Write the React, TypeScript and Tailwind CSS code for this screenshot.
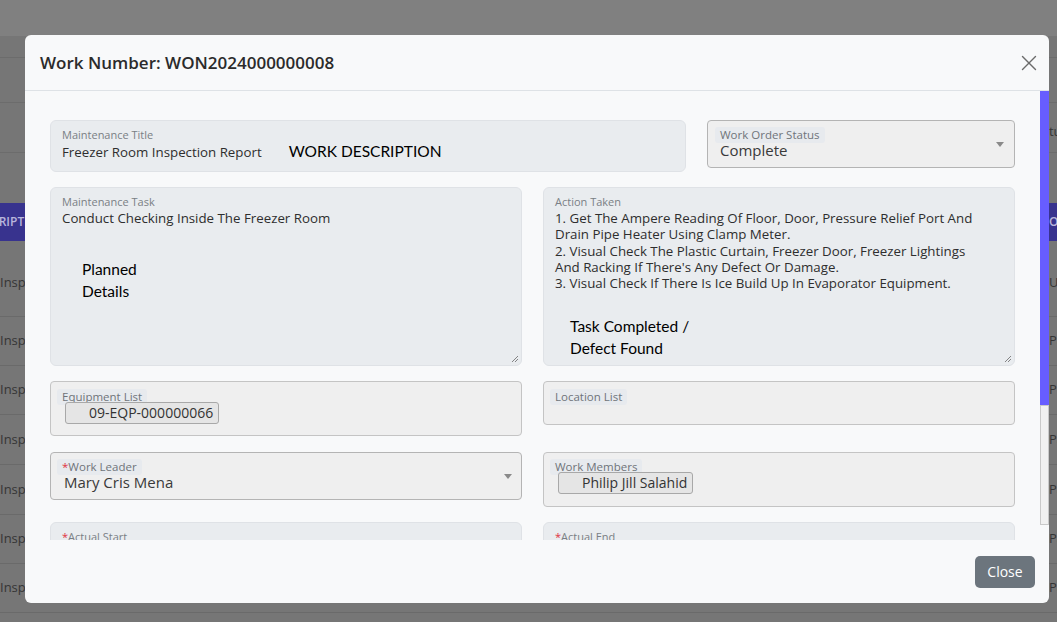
import { X } from 'lucide-react';

const rows = [
  { left: 'Inspection Report', right: 'Used', h: 'h-[76px] pt-[8px]' },
  { left: 'Inspection Report', right: 'Paid', h: 'h-[49px]' },
  { left: 'Inspection Report', right: 'Proc', h: 'h-[49px]' },
  { left: 'Inspection Report', right: 'Paid', h: 'h-[50px]' },
  { left: 'Inspection Report', right: 'Paid', h: 'h-[50px]' },
  { left: 'Inspection Report', right: 'Paid', h: 'h-[49px]' },
  { left: 'Inspection Report', right: 'Paid', h: 'h-[49px]' },
];

function Caret() {
  return (
    <svg width="8" height="5" viewBox="0 0 8 5" className="shrink-0">
      <path d="M0 0 L8 0 L4 5 Z" fill="#8a8a8a" />
    </svg>
  );
}

function Resize() {
  return (
    <svg width="8" height="8" viewBox="0 0 8 8" className="absolute right-[2px] bottom-[2px]">
      <path d="M7 1 L1 7 M7 4 L4 7" stroke="#777" strokeWidth="0.9" />
    </svg>
  );
}

function Pill({ children }: { children: React.ReactNode }) {
  return (
    <div className="flex">
      <span className="block h-[16px] rounded-[3px] bg-[#e7eaee] px-[5px] text-[11.5px] leading-[16px] text-[#6f747a]">
        {children}
      </span>
    </div>
  );
}

function Chip({ text }: { text: string }) {
  return (
    <div className="flex">
      <span className="block h-[22px] rounded-[3px] border border-[#a8a8a8] bg-[#e5e5e5] pl-[23px] pr-[5px] text-[14px] leading-[20px] text-[#333]">
        {text}
      </span>
    </div>
  );
}

function Req() {
  return <span className="text-[#e0323f]">*</span>;
}

export default function App() {
  return (
    <div className="relative h-[622px] w-[1057px] overflow-hidden bg-[#767676] font-['Open_Sans',sans-serif]">
      {/* page behind the dimmed backdrop */}
      <div className="flex h-full flex-col">
        <div className="h-[36px] bg-[#808080]" />
        <div className="h-[22px] border-b border-[#6c6c6c]" />
        <div className="h-[45px] border-b border-[#6c6c6c]" />
        <div className="flex h-[50px] items-center justify-end border-b border-[#6c6c6c] pt-[8px] text-[13px] text-[#353535]">
          <span className="flex w-[8px] justify-start overflow-hidden whitespace-nowrap">
            <span className="-ml-[19px]">Status</span>
          </span>
        </div>
        <div className="h-[50px]" />
        <div className="flex h-[38px] items-center justify-between bg-[#38338e] text-[12px] font-semibold text-[#b9b6dc]">
          <span className="-ml-[31px]">DESCRIPTION</span>
          <span className="w-[8px] overflow-hidden whitespace-nowrap">OR</span>
        </div>
        {rows.map((r, i) => (
          <div key={i} className={`flex ${r.h} shrink-0 items-center justify-between border-b border-[#6a6a6a] text-[13px] text-[#353535]`}>
            <span className="whitespace-nowrap">{r.left}</span>
            <span className="w-[8px] overflow-hidden whitespace-nowrap">{r.right}</span>
          </div>
        ))}
      </div>

      {/* modal */}
      <div className="absolute left-[25px] top-[35px] flex h-[568px] w-[1024px] flex-col overflow-hidden rounded-[6px] bg-[#f8f9fa]">
        <div className="flex h-[56px] shrink-0 items-center justify-between border-b border-[#dee2e6] pl-[15px] pr-[7px]">
          <h1 className="text-[17px] font-semibold text-[#2b2b2b]">Work Number: WON2024000000008</h1>
          <X size={26} strokeWidth={1.3} className="text-[#6b6b6b]" />
        </div>

        <div className="flex h-[449px] shrink-0">
          <div className="flex flex-1 flex-col overflow-hidden px-[25px] pt-[29px]">
            {/* row 1 */}
            <div className="flex items-start gap-[21px]">
              <div className="h-[52px] w-[636px] rounded-[6px] border border-[#dfe2e6] bg-[#e9ecef] px-[11px] pt-[7px]">
                <div className="text-[11px] leading-[14px] text-[#7a7f85]">Maintenance Title</div>
                <div className="-mt-[1px] flex items-baseline text-[13.3px] leading-[20px] text-[#2e2e2e]">
                  Freezer Room Inspection Report
                  <span className="ml-[27px] font-['Lato',sans-serif] text-[15.5px] text-black">WORK DESCRIPTION</span>
                </div>
              </div>
              <div className="flex h-[48px] w-[308px] items-center rounded-[4px] border border-[#b4b4b4] bg-[#efefef] pl-[7px] pr-[10px]">
                <div className="flex-1 -mt-[1px]">
                  <Pill>Work Order Status</Pill>
                  <div className="-mt-[2px] pl-[5px] text-[15px] leading-[19px] text-[#3a3a3a]">Complete</div>
                </div>
                <Caret />
              </div>
            </div>

            {/* row 2 */}
            <div className="mt-[15px] flex gap-[21px]">
              <div className="relative h-[179px] w-[472px] rounded-[6px] border border-[#dfe2e6] bg-[#e9ecef] px-[11px] pt-[7px]">
                <div className="text-[11px] leading-[14px] text-[#7a7f85]">Maintenance Task</div>
                <div className="text-[13.3px] leading-[18px] text-[#2e2e2e]">Conduct Checking Inside The Freezer Room</div>
                <div className="ml-[20px] mt-[31px] font-['Lato',sans-serif] text-[15.5px] leading-[22px] text-black">
                  Planned
                  <br />
                  Details
                </div>
                <Resize />
              </div>
              <div className="relative h-[179px] w-[472px] rounded-[6px] border border-[#dfe2e6] bg-[#e9ecef] px-[11px] pt-[7px]">
                <div className="text-[11px] leading-[14px] text-[#7a7f85]">Action Taken</div>
                <div className="mt-[1px] whitespace-nowrap text-[13.3px] leading-[16.3px] text-[#2e2e2e]">
                  <div>1. Get The Ampere Reading Of Floor, Door, Pressure Relief Port And</div>
                  <div>Drain Pipe Heater Using Clamp Meter.</div>
                  <div>2. Visual Check The Plastic Curtain, Freezer Door, Freezer Lightings</div>
                  <div>And Racking If There's Any Defect Or Damage.</div>
                  <div>3. Visual Check If There Is Ice Build Up In Evaporator Equipment.</div>
                </div>
                <div className="ml-[15px] mt-[24px] font-['Lato',sans-serif] text-[15.5px] leading-[22px] text-black">
                  Task Completed /
                  <br />
                  Defect Found
                </div>
                <Resize />
              </div>
            </div>

            {/* row 3 */}
            <div className="mt-[15px] flex items-start gap-[21px]">
              <div className="h-[55px] w-[472px] rounded-[4px] border border-[#c4c4c4] bg-[#efefef] pl-[6px] pt-[7px]">
                <Pill>Equipment List</Pill>
                <div className="-mt-[3px] ml-[8px]">
                  <Chip text="09-EQP-000000066" />
                </div>
              </div>
              <div className="h-[44px] w-[472px] rounded-[4px] border border-[#c4c4c4] bg-[#efefef] pl-[6px] pt-[7px]">
                <Pill>Location List</Pill>
              </div>
            </div>

            {/* row 4 */}
            <div className="mt-[16px] flex items-start gap-[21px]">
              <div className="flex h-[48px] w-[472px] items-center rounded-[4px] border border-[#b4b4b4] bg-[#efefef] pl-[6px] pr-[9px]">
                <div className="flex-1 -mt-[1px]">
                  <Pill>
                    <Req />
                    Work Leader
                  </Pill>
                  <div className="-mt-[2px] pl-[7px] text-[15px] leading-[19px] text-[#3a3a3a]">Mary Cris Mena</div>
                </div>
                <Caret />
              </div>
              <div className="h-[55px] w-[472px] rounded-[4px] border border-[#c4c4c4] bg-[#efefef] pl-[6px] pt-[6px]">
                <Pill>Work Members</Pill>
                <div className="-mt-[3px] ml-[8px]">
                  <Chip text="Philip Jill Salahid" />
                </div>
              </div>
            </div>

            {/* row 5 */}
            <div className="mt-[15px] flex items-start gap-[21px]">
              <div className="h-[50px] w-[472px] shrink-0 rounded-[6px] border border-[#dfe2e6] bg-[#e9ecef] px-[11px] pt-[7px]">
                <div className="text-[11px] leading-[14px] text-[#7a7f85]">
                  <Req />
                  Actual Start
                </div>
              </div>
              <div className="h-[50px] w-[472px] shrink-0 rounded-[6px] border border-[#dfe2e6] bg-[#e9ecef] px-[11px] pt-[7px]">
                <div className="text-[11px] leading-[14px] text-[#7a7f85]">
                  <Req />
                  Actual End
                </div>
              </div>
            </div>
          </div>

          {/* scrollbar */}
          <div className="flex w-[9px] shrink-0 flex-col">
            <div className="h-[314px] bg-[#675dff]" />
            <div className="h-[120px] border border-[#c9c9c9] bg-[#f1f1f1]" />
          </div>
        </div>

        <div className="flex flex-1 items-center justify-end pr-[14px]">
          <button className="h-[32px] w-[60px] rounded-[5px] bg-[#6c757d] text-[14px] font-medium text-white">Close</button>
        </div>
      </div>
    </div>
  );
}
